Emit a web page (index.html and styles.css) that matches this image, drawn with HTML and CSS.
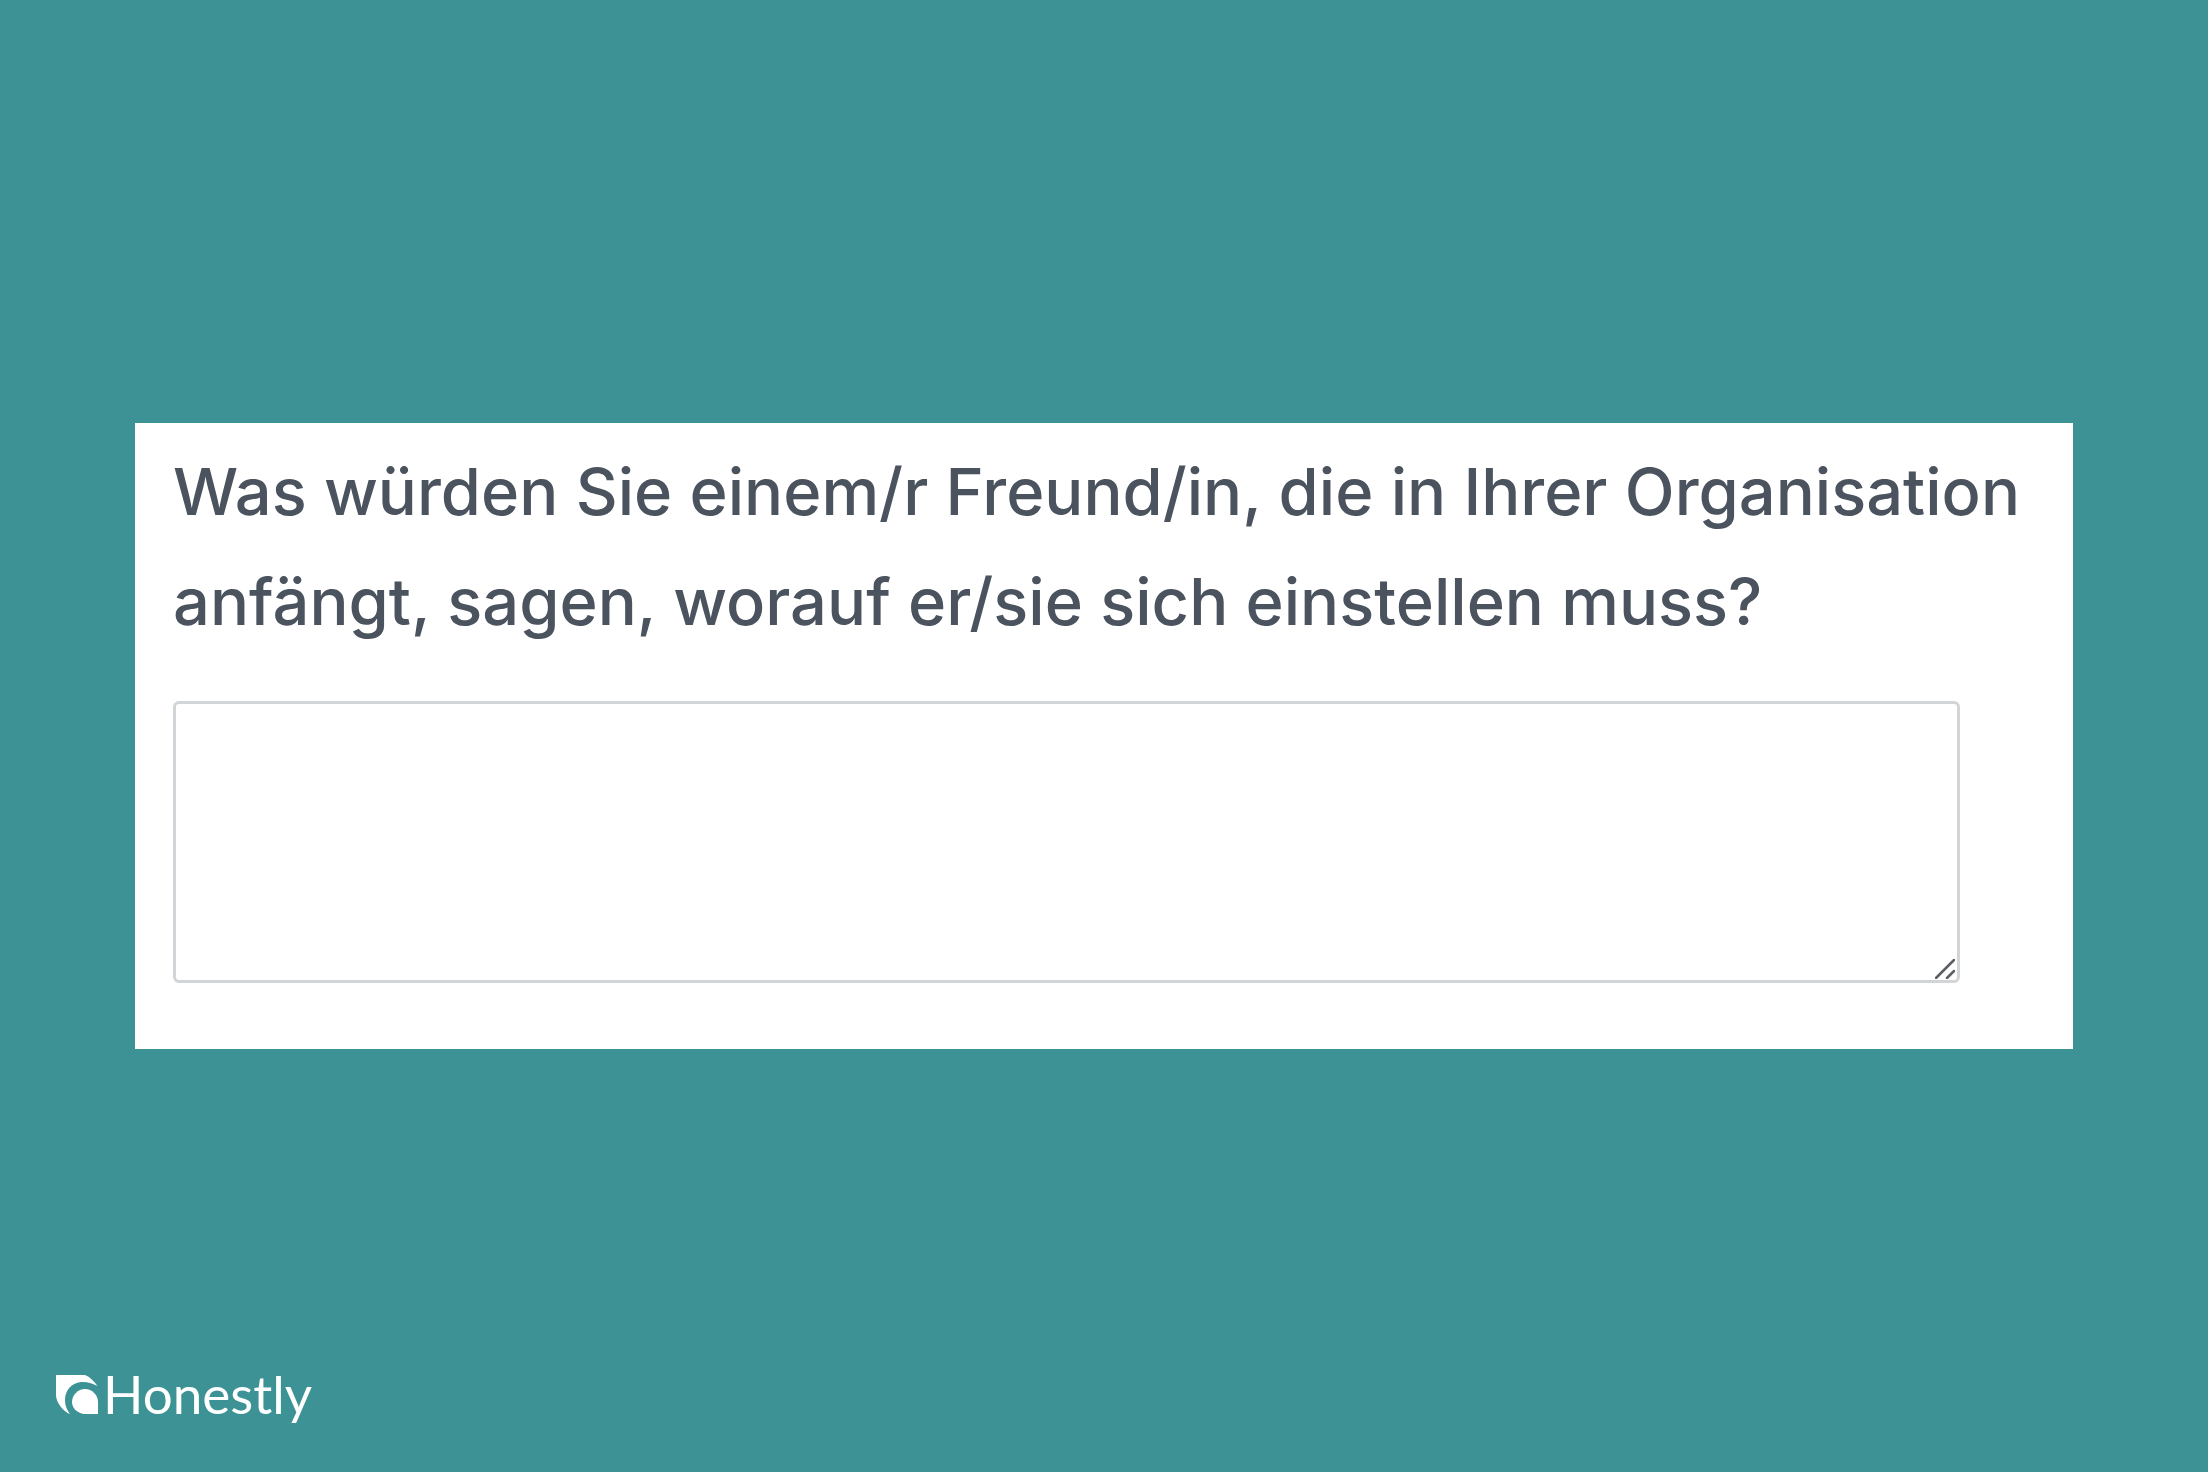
FILE: index.html
```
<!DOCTYPE html>
<html lang="de">
<head>
    <meta charset="UTF-8">
    <meta name="viewport" content="width=device-width, initial-scale=1">
    <title>Honestly</title>
    <link rel="stylesheet" href="styles.css">
</head>
<body>
    <main class="survey">
        <form class="card">
            <label class="question" for="answer">Was würden Sie einem/r Freund/in, die in Ihrer Organisation anfängt, sagen, worauf er/sie sich einstellen muss?</label>
            <div class="answer-field">
                <textarea class="answer" id="answer" name="answer"></textarea>
                <svg class="grip" viewBox="0 0 20 20" aria-hidden="true">
                    <path d="M1 19L19 1M12 19L19 12" fill="none" stroke="#5c5f63" stroke-width="2.500" stroke-linecap="round"/>
                </svg>
            </div>
        </form>
    </main>

    <footer class="brand">
        <svg class="brand-mark" viewBox="0 0 42 39" aria-hidden="true">
            <path d="M0 0H29C34 2 38 6 41.500 11C35 7.500 30 6.500 25 7C15 8 9 16 9 25C9 31 11 35 14 39C8 37 0 28 0 20Z" fill="#fff"/>
            <path d="M42 39H28C21 38 16 33 16 27C16 20 22 14 29 14C36 14 42 20 42 27Z" fill="#fff"/>
        </svg>
        <span class="brand-name">Honestly</span>
    </footer>
</body>
</html>
```

FILE: styles.css
```
* {
    box-sizing: border-box;
}
body {
    display: grid;
    grid-template-rows: 1fr auto 1fr;
    min-height: 100vh;
    margin: 0;
    background: #3c9294;
    font-family: Inter, "Liberation Sans", sans-serif;
}
.survey {
    grid-row: 2;
    padding: 0 135px;
}
.card {
    padding: 14px 38px 66px;
    background: #fff;
}
.question {
    display: block;
    color: #4b535e;
    font-size: 65px;
    font-weight: 500;
    line-height: 110px;
}
.answer-field {
    position: relative;
    margin: 44px 75px 0 0;
}
.answer {
    display: block;
    width: 100%;
    height: 282px;
    padding: 16px;
    border: 3px solid #d2d5d8;
    border-radius: 6px;
    background: #fff;
    color: #4b535e;
    font: inherit;
    font-size: 40px;
    resize: none;
}
.grip {
    position: absolute;
    right: 5px;
    bottom: 4px;
    width: 20px;
    height: 20px;
    pointer-events: none;
}
.brand {
    grid-row: 3;
    align-self: end;
    display: flex;
    align-items: center;
    gap: 5px;
    padding: 0 56px 48px;
}
.brand-mark {
    width: 42px;
    height: 39px;
}
.brand-name {
    color: #fff;
    font-family: Lato, sans-serif;
    font-size: 53px;
    line-height: 60px;
}
```
